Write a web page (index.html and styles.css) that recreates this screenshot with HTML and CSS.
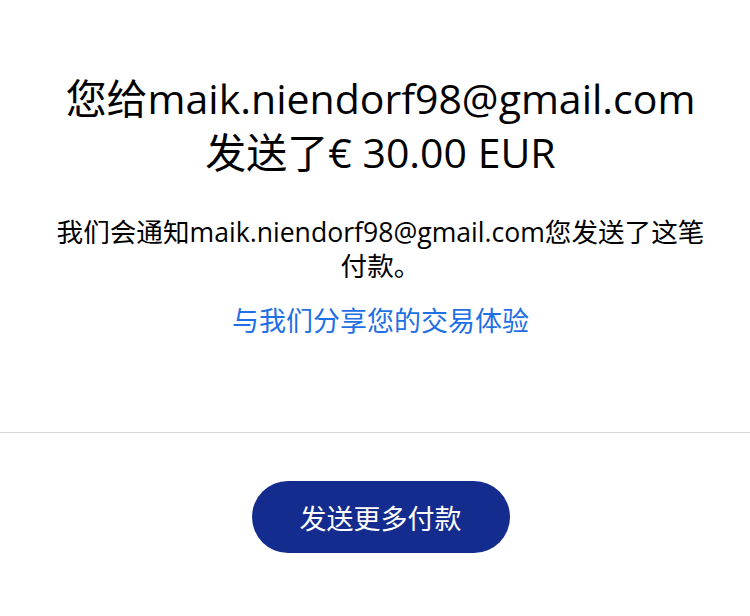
FILE: index.html
```html
<!DOCTYPE html>
<html lang="zh-CN">
<head>
  <meta charset="UTF-8">
  <meta name="viewport" content="width=device-width, initial-scale=1.0">
  <title>付款已发送</title>
  <link rel="stylesheet" href="styles.css">
</head>
<body>
  <div class="container">
    <section class="summary">
      <h1>您给maik.niendorf98@gmail.com<br>发送了€ 30.00 EUR</h1>
      <p class="notice">我们会通知maik.niendorf98@gmail.com您发送了这笔付款。</p>
      <a class="feedback" href="#">与我们分享您的交易体验</a>
    </section>

    <hr class="divider">

    <div class="actions">
      <button class="btn-primary">发送更多付款</button>
    </div>
  </div>
</body>
</html>
```

FILE: styles.css
```css
:root {
  --text-dark: #000000;
  --link-blue: #1f6fe5;
  --navy: #142c8e;
  --line: #dad8d2;
}

body {
  margin: 0;
  font-family: "Open Sans", "Noto Sans CJK SC", sans-serif;
  color: var(--text-dark);
  background: #ffffff;
}

.container {
  width: 100%;
}

.summary {
  display: flex;
  flex-direction: column;
  align-items: center;
  text-align: center;
  padding: 71px 30px 0 41px;
}

h1 {
  font-size: 41px;
  font-weight: 400;
  line-height: 54px;
  margin: 0;
}

.notice {
  font-size: 26.6px;
  line-height: 34px;
  margin: 36px 0 0;
  max-width: 660px;
}

.feedback {
  display: block;
  font-size: 27px;
  line-height: 34px;
  margin-top: 21px;
  color: var(--link-blue);
  text-decoration: none;
}

.divider {
  border: none;
  border-top: 1px solid var(--line);
  margin: 94px 0 0;
}

.actions {
  display: flex;
  justify-content: center;
  padding: 48px 0 0 11px;
}

.btn-primary {
  font-family: inherit;
  font-size: 27px;
  color: #ffffff;
  background: var(--navy);
  border: none;
  border-radius: 36px;
  width: 258px;
  height: 72px;
  cursor: pointer;
}
```
